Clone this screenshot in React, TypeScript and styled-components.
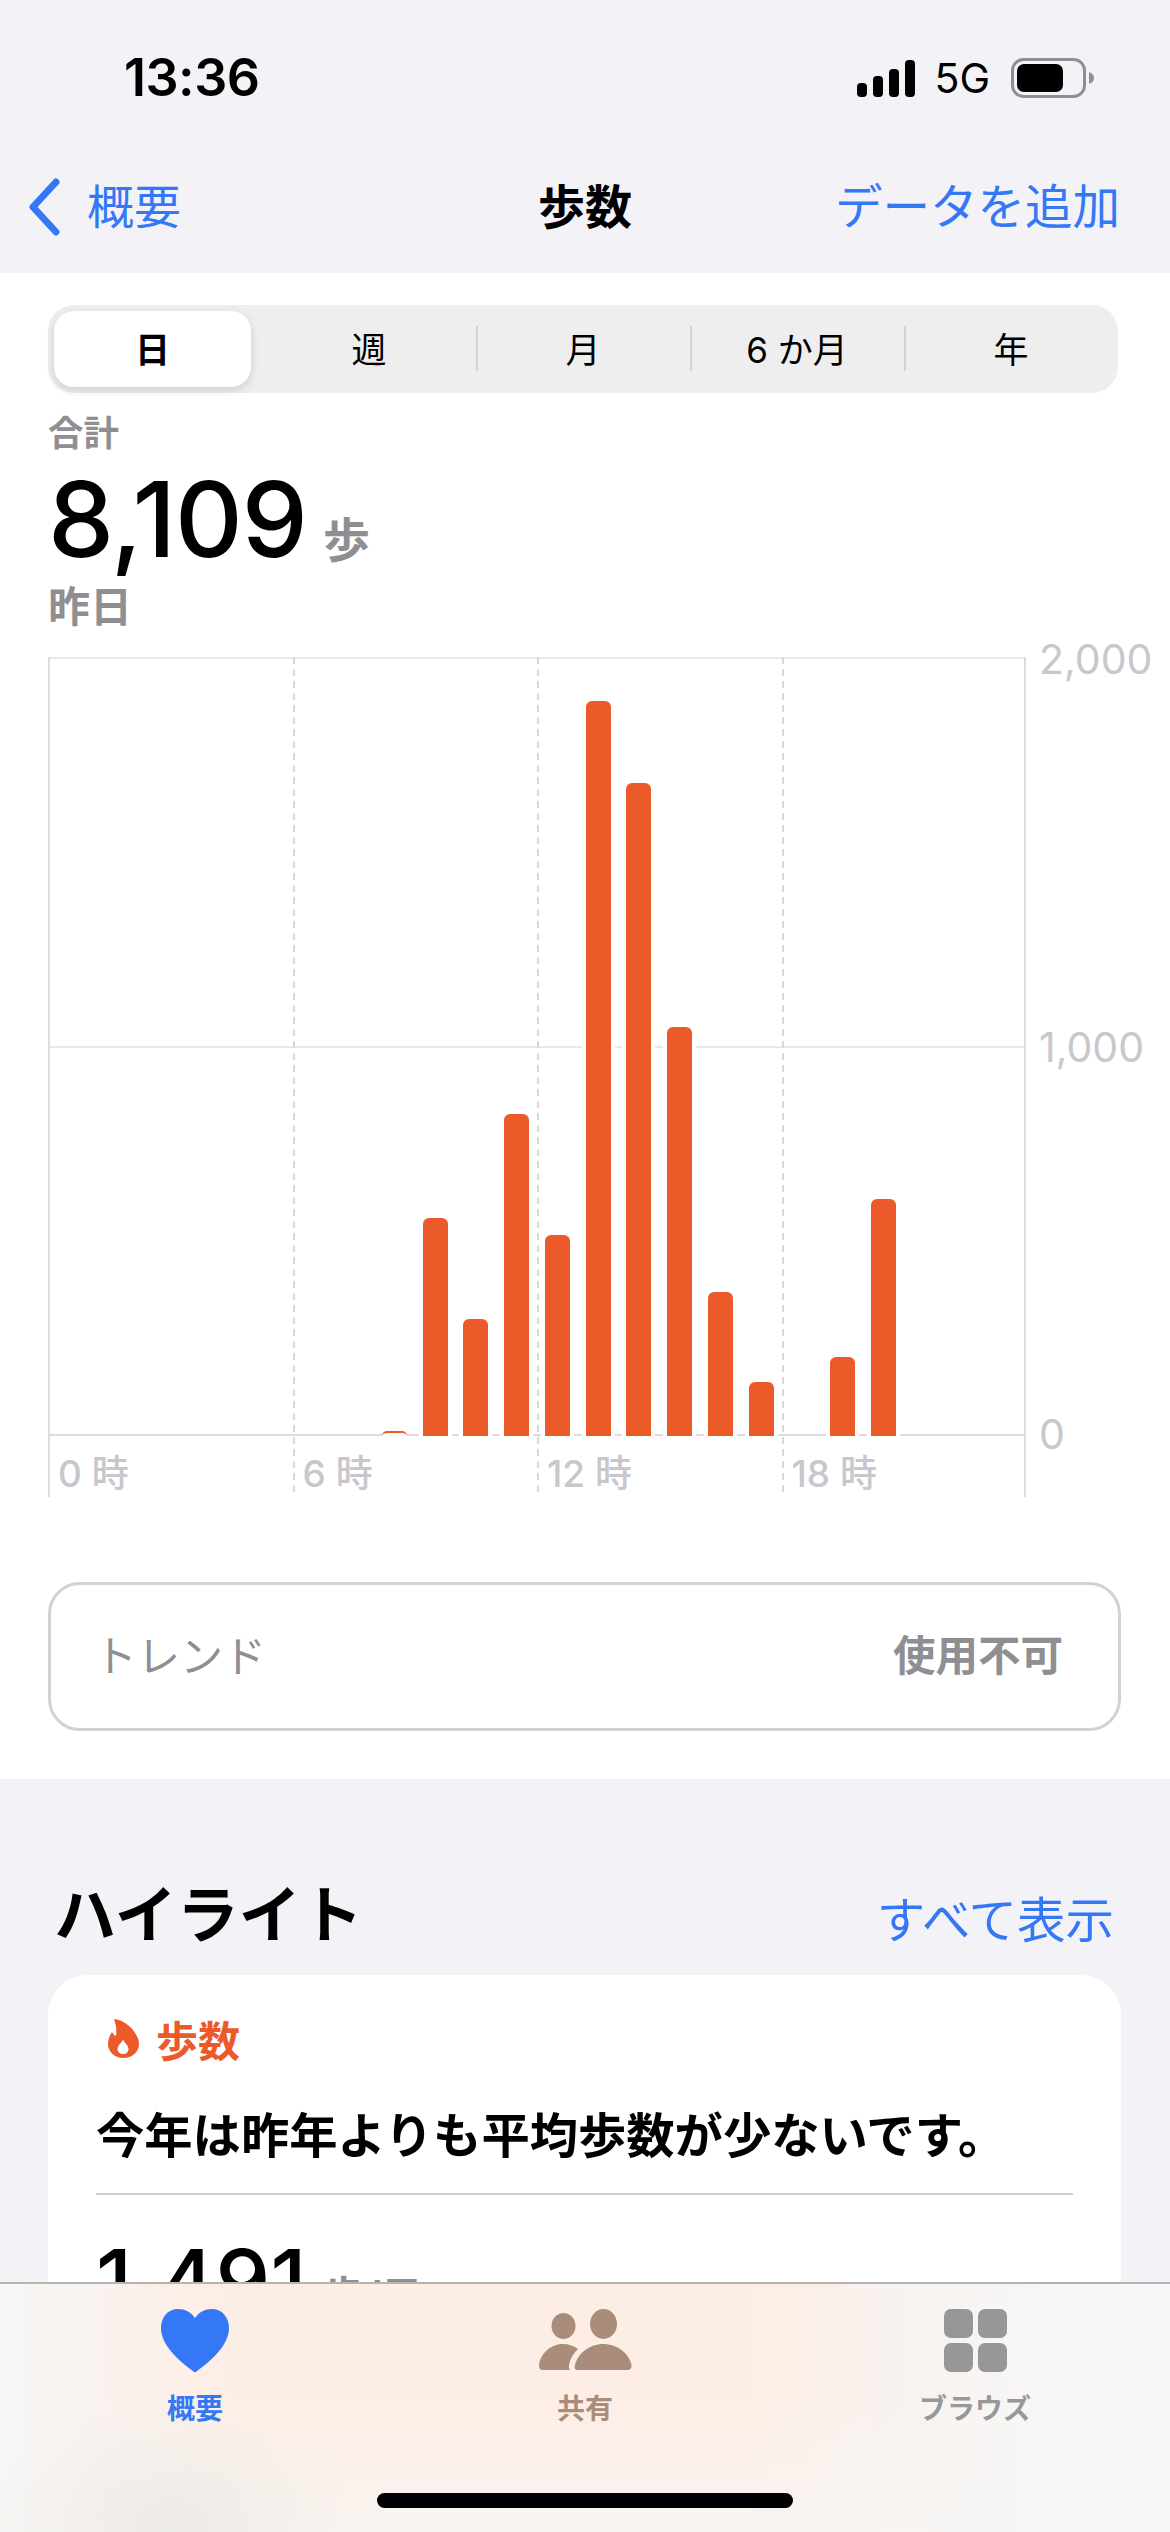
import React from "react";
import styled, { createGlobalStyle } from "styled-components";

const BLUE = "#3478f6";
const ORANGE = "#ec5a2a";
const GRAY = "#8e8e93";
const AXIS = "#c7c7cc";

const Global = createGlobalStyle`
  html, body { margin: 0; padding: 0; background: #f2f2f7; }
  body { font-family: "Inter", "Noto Sans CJK JP", sans-serif; color: #000; }
  * { box-sizing: border-box; }
`;

const Screen = styled.div`
  position: relative;
  width: 1170px;
  height: 2532px;
  overflow: hidden;
  background: #f2f2f7;
`;

const Header = styled.header`
  height: 273px;
  display: flex;
  flex-direction: column;
`;

const StatusBar = styled.div`
  height: 156px;
  display: flex;
  align-items: center;
  justify-content: space-between;
  padding: 0 76px 0 124px;
`;

const Time = styled.div`
  font-size: 52px;
  font-weight: 600;
  line-height: 60px;
  letter-spacing: -0.5px;
`;

const StatusIcons = styled.div`
  display: flex;
  align-items: center;
`;

const Network = styled.span`
  font-size: 41px;
  font-weight: 400;
  line-height: 44px;
  margin: 0 21px 0 19px;
`;

const NavBar = styled.nav`
  height: 102px;
  display: grid;
  grid-template-columns: 1fr auto 1fr;
  align-items: center;
  padding: 0 50px 0 50px;
`;

const BackLink = styled.div`
  margin-left: -22px;
  display: flex;
  align-items: center;
  gap: 27px;
  color: ${BLUE};
  font-size: 47px;
  line-height: 60px;
`;

const NavTitle = styled.div`
  font-size: 47px;
  font-weight: 700;
  line-height: 60px;
`;

const NavAction = styled.div`
  justify-self: end;
  color: ${BLUE};
  font-size: 47.5px;
  line-height: 60px;
`;

const Summary = styled.section`
  background: #fff;
  padding: 32px 49px 48px 48px;
`;

const Segments = styled.div`
  width: 1070px;
  height: 88px;
  display: grid;
  grid-template-columns: repeat(5, 1fr);
  background: #eeeeef;
  border-radius: 26px;
`;

const Segment = styled.div<{ $active?: boolean; $sep?: boolean }>`
  position: relative;
  display: flex;
  align-items: center;
  justify-content: center;
  padding-bottom: 4px;
  font-size: 35px;
  font-weight: ${(p) => (p.$active ? 600 : 400)};
  ${(p) =>
    p.$active &&
    `
    margin: 6px 11px 6px 6px;
    background: #fff;
    border-radius: 20px;
    box-shadow: 0 3px 9px rgba(0,0,0,.14);
  `}
  ${(p) =>
    p.$sep &&
    `
    &::before {
      content: "";
      position: absolute;
      left: 0;
      top: 21px;
      width: 2px;
      height: 45px;
      background: #d2d2d4;
    }
  `}
`;

const SmallLabel = styled.div`
  margin-top: 21px;
  color: ${GRAY};
  font-size: 35.5px;
  font-weight: 700;
  line-height: 40px;
`;

const TotalRow = styled.div`
  margin-top: 15px;
  height: 100px;
  display: flex;
  align-items: baseline;
  gap: 16px;
`;

const TotalValue = styled.span`
  font-size: 105px;
  line-height: 100px;
  font-weight: 500;
  letter-spacing: -1px;
`;

const TotalUnit = styled.span`
  color: ${GRAY};
  font-size: 47px;
  line-height: 100px;
  font-weight: 700;
`;

const DateLabel = styled.div`
  margin-top: 16px;
  color: ${GRAY};
  font-size: 42px;
  font-weight: 700;
  line-height: 44px;
`;

const Chart = styled.div`
  margin-top: 28px;
  display: flex;
  height: 841px;
`;

const Plot = styled.div`
  position: relative;
  flex: none;
  width: 978px;
  height: 840px;
  border-right: 2px solid #dcdcdc;
`;

const PlotBody = styled.div`
  position: relative;
  height: 779px;
  border-top: 2px solid #e8e8e8;
  border-bottom: 2px solid #dcdcdc;
  &::after {
    content: "";
    position: absolute;
    left: 0;
    right: 0;
    top: 387px;
    height: 2px;
    background: #e8e8e8;
  }
`;

const Bars = styled.div`
  position: absolute;
  z-index: 1;
  inset: 0 -2px -2px 0;
  display: grid;
  grid-template-columns: repeat(24, 1fr);
  align-items: end;
  justify-items: center;
`;

const Bar = styled.div`
  width: 25px;
  background: ${ORANGE};
  border-radius: 6px 6px 0 0;
  box-shadow: 4px 0 0 #fff, -4px 0 0 #fff;
`;

const SliverBar = styled.div`
  width: 25px;
  height: 5px;
  background: #fff;
  border-top: 2px solid ${ORANGE};
  border-radius: 8px 8px 0 0;
`;

const TimeColumns = styled.div`
  position: absolute;
  inset: 0 -2px 0 0;
  display: grid;
  grid-template-columns: repeat(4, 1fr);
`;

const TimeColumn = styled.div<{ $solid?: boolean }>`
  position: relative;
  display: flex;
  align-items: flex-end;
  padding: 0 0 0 10px;
  &::before {
    content: "";
    position: absolute;
    left: 0;
    top: 0;
    bottom: 0;
    width: 2px;
    background: ${(p) =>
      p.$solid
        ? "#dcdcdc"
        : "repeating-linear-gradient(#d8d8d8 0 7px, transparent 7px 12px)"};
  }
`;

const TimeLabel = styled.span`
  color: ${AXIS};
  font-size: 37px;
  line-height: 46px;
  font-weight: 500;
`;

const YAxis = styled.div`
  margin: -23px 0 0 13px;
  height: 825px;
  flex: none;
  display: flex;
  flex-direction: column;
  justify-content: space-between;
  color: ${AXIS};
  font-size: 41px;
  line-height: 50px;
`;

const TrendCard = styled.div`
  margin-top: 84px;
  width: 1073px;
  height: 149px;
  display: flex;
  align-items: center;
  justify-content: space-between;
  padding: 0 55px 8px 43px;
  border: 3px solid #d1d1d6;
  border-radius: 32px;
  color: ${GRAY};
  font-size: 43px;
`;

const TrendValue = styled.span`
  font-size: 42.5px;
  font-weight: 700;
`;

const Highlights = styled.section`
  padding: 97px 49px 0 48px;
`;

const HighlightHead = styled.div`
  height: 80px;
  display: flex;
  align-items: center;
  justify-content: space-between;
  padding: 0 7px 0 6px;
`;

const HighlightTitle = styled.h2`
  margin: 0;
  font-size: 62px;
  font-weight: 700;
  line-height: 80px;
`;

const HighlightLink = styled.span`
  margin-top: 10px;
  color: ${BLUE};
  font-size: 48.5px;
  line-height: 60px;
`;

const HighlightCard = styled.article`
  margin-top: 19px;
  height: 520px;
  padding: 37px 48px 0 48px;
  background: #fff;
  border-radius: 40px;
`;

const CardHead = styled.div`
  height: 52px;
  padding-left: 12px;
  display: flex;
  align-items: center;
  gap: 17px;
  color: ${ORANGE};
  font-size: 42px;
  font-weight: 700;
`;

const CardMessage = styled.p`
  margin: 42px 0 0;
  font-size: 48.3px;
  font-weight: 700;
  line-height: 60px;
  white-space: nowrap;
`;

const CardDivider = styled.hr`
  margin: 27px 0 0;
  height: 2px;
  border: 0;
  background: #cfcfcf;
`;

const CardStat = styled.div`
  margin-top: 41px;
  height: 90px;
  display: flex;
  align-items: baseline;
  gap: 16px;
`;

const CardStatValue = styled.span`
  font-size: 87px;
  line-height: 90px;
  font-weight: 500;
`;

const CardStatUnit = styled.span`
  color: ${GRAY};
  font-size: 42px;
  line-height: 90px;
  font-weight: 700;
`;

const TabBar = styled.footer`
  position: absolute;
  left: 0;
  right: 0;
  bottom: 0;
  height: 250px;
  display: grid;
  grid-template-columns: repeat(3, 1fr);
  padding-top: 25px;
  border-top: 2px solid #b4b4b4;
  background:
    radial-gradient(ellipse 190px 120px at 170px 240px, rgba(236, 234, 230, 0.9), rgba(236, 234, 230, 0)),
    linear-gradient(180deg, rgba(248, 247, 246, 0) 45%, rgba(248, 246, 244, 0.75) 100%),
    linear-gradient(90deg, #f7f7f7 0, #f9f2ee 8%, #fdeee5 20%, #fdeee5 64%, #f8f2ef 76%, #f7f7f7 90%);
`;

const Tab = styled.div<{ $color: string }>`
  display: flex;
  flex-direction: column;
  align-items: center;
  color: ${(p) => p.$color};
  font-size: 28px;
  font-weight: 700;
  line-height: 36px;
`;

const TabIconBox = styled.div`
  height: 64px;
  margin-bottom: 18px;
  display: flex;
  align-items: flex-start;
`;

const BrowseGrid = styled.div`
  width: 63px;
  height: 63px;
  display: grid;
  grid-template-columns: 1fr 1fr;
  grid-template-rows: 1fr 1fr;
  gap: 5px;
`;

const BrowseTile = styled.div`
  background: #979797;
  border-radius: 7px;
`;

const HomeIndicator = styled.div`
  position: absolute;
  left: 377px;
  bottom: 24px;
  width: 416px;
  height: 15px;
  border-radius: 8px;
  background: #000;
`;

const hours: Record<number, number> = {
  9: 216, 10: 115, 11: 320, 12: 199, 13: 733, 14: 651, 15: 407, 16: 142, 17: 52, 19: 77, 20: 235,
};

function SignalIcon() {
  return (
    <svg width="58" height="37" viewBox="0 0 58 37">
      <rect x="0" y="23" width="10" height="14" rx="4" fill="#000" />
      <rect x="16" y="16" width="10" height="21" rx="4" fill="#000" />
      <rect x="32" y="9" width="10" height="28" rx="4" fill="#000" />
      <rect x="48" y="0" width="10" height="37" rx="4" fill="#000" />
    </svg>
  );
}

function BatteryIcon() {
  return (
    <svg width="83" height="40" viewBox="0 0 83 40">
      <rect x="1.5" y="1.5" width="72" height="37" rx="11" fill="none" stroke="#8e8e93" strokeWidth="3" />
      <rect x="6" y="6" width="46" height="28" rx="7" fill="#000" />
      <path d="M78 14 C81 15 83 17 83 20 C83 23 81 25 78 26 Z" fill="#8e8e93" />
    </svg>
  );
}

function ChevronIcon() {
  return (
    <svg width="32" height="58" viewBox="0 0 32 58">
      <path d="M28 4 L5 29 L28 54" fill="none" stroke={BLUE} strokeWidth="7" strokeLinecap="round" strokeLinejoin="round" />
    </svg>
  );
}

function FlameIcon() {
  return (
    <svg width="31" height="39" viewBox="0 0 31 39">
      <path
        fillRule="evenodd"
        fill={ORANGE}
        d="M6 0 C14 1 20 5 25 11 C29 16 31 21 31 25 C31 33 24 39 15.5 39 C7 39 0 33 0 25 C0 20 2 16 4 13 C5 15 6 16 8 17 C9 11 8 6 6 0 Z M15 20 C15 23 10 25 9.500 30 C9.500 33 12 35 15 35 C18 35 20.500 33 20.500 30 C20.500 26 16 24 15 20 Z"
      />
    </svg>
  );
}

function HeartIcon() {
  return (
    <svg width="68" height="63" viewBox="0 0 68 63">
      <path
        fill={BLUE}
        d="M34 9 C30 3 24 0 17 0 C7 0 0 8 0 19 C0 36 17 51 32.500 62.500 Q34 63.500 35.500 62.500 C51 51 68 36 68 19 C68 8 61 0 51 0 C44 0 38 3 34 9 Z"
      />
    </svg>
  );
}

function PeopleIcon() {
  const c = "#a98d7a";
  return (
    <svg width="93" height="61" viewBox="0 0 93 61">
      <ellipse cx="24.500" cy="17" rx="12" ry="13" fill={c} />
      <ellipse cx="64.500" cy="15" rx="13.500" ry="15" fill={c} />
      <path fill={c} d="M4 61 C1 61 0 59 0 56 C2 43 13 35 24 35 C30 35 35 37 39 40 C34 45 31 50 30 56 C29.700 58 30 60 31 61 Z" />
      <path fill={c} d="M39 61 C36 61 35 59 36 56 C39 44 51 35 64 35 C78 35 90 44 92.500 56 C93 59 91 61 88 61 Z" />
    </svg>
  );
}

export default function App() {
  return (
    <Screen>
      <Global />
      <Header>
        <StatusBar>
          <Time>13:36</Time>
          <StatusIcons>
            <SignalIcon />
            <Network>5G</Network>
            <BatteryIcon />
          </StatusIcons>
        </StatusBar>
        <NavBar>
          <BackLink>
            <ChevronIcon />
            概要
          </BackLink>
          <NavTitle>歩数</NavTitle>
          <NavAction>データを追加</NavAction>
        </NavBar>
      </Header>

      <Summary>
        <Segments>
          <Segment $active>日</Segment>
          <Segment>週</Segment>
          <Segment $sep>月</Segment>
          <Segment $sep>6 か月</Segment>
          <Segment $sep>年</Segment>
        </Segments>
        <SmallLabel>合計</SmallLabel>
        <TotalRow>
          <TotalValue>8,109</TotalValue>
          <TotalUnit>歩</TotalUnit>
        </TotalRow>
        <DateLabel>昨日</DateLabel>
        <Chart>
          <Plot>
            <PlotBody>
              <Bars>
                {Array.from({ length: 24 }, (_, h) =>
                  h === 8 ? (
                    <SliverBar key={h} />
                  ) : hours[h] ? (
                    <Bar key={h} style={{ height: hours[h] + 2 }} />
                  ) : (
                    <span key={h} />
                  )
                )}
              </Bars>
            </PlotBody>
            <TimeColumns>
              <TimeColumn $solid><TimeLabel>0 時</TimeLabel></TimeColumn>
              <TimeColumn><TimeLabel>6 時</TimeLabel></TimeColumn>
              <TimeColumn><TimeLabel>12 時</TimeLabel></TimeColumn>
              <TimeColumn><TimeLabel>18 時</TimeLabel></TimeColumn>
            </TimeColumns>
          </Plot>
          <YAxis>
            <span>2,000</span>
            <span>1,000</span>
            <span>0</span>
          </YAxis>
        </Chart>
        <TrendCard>
          <span>トレンド</span>
          <TrendValue>使用不可</TrendValue>
        </TrendCard>
      </Summary>

      <Highlights>
        <HighlightHead>
          <HighlightTitle>ハイライト</HighlightTitle>
          <HighlightLink>すべて表示</HighlightLink>
        </HighlightHead>
        <HighlightCard>
          <CardHead>
            <FlameIcon />
            歩数
          </CardHead>
          <CardMessage>今年は昨年よりも平均歩数が少ないです。</CardMessage>
          <CardDivider />
          <CardStat>
            <CardStatValue>1,491</CardStatValue>
            <CardStatUnit>歩/日</CardStatUnit>
          </CardStat>
        </HighlightCard>
      </Highlights>

      <TabBar>
        <Tab $color={BLUE}>
          <TabIconBox><HeartIcon /></TabIconBox>
          概要
        </Tab>
        <Tab $color="#a98d7a">
          <TabIconBox><PeopleIcon /></TabIconBox>
          共有
        </Tab>
        <Tab $color="#989898">
          <TabIconBox>
            <BrowseGrid>
              <BrowseTile />
              <BrowseTile />
              <BrowseTile />
              <BrowseTile />
            </BrowseGrid>
          </TabIconBox>
          ブラウズ
        </Tab>
        <HomeIndicator />
      </TabBar>
    </Screen>
  );
}
